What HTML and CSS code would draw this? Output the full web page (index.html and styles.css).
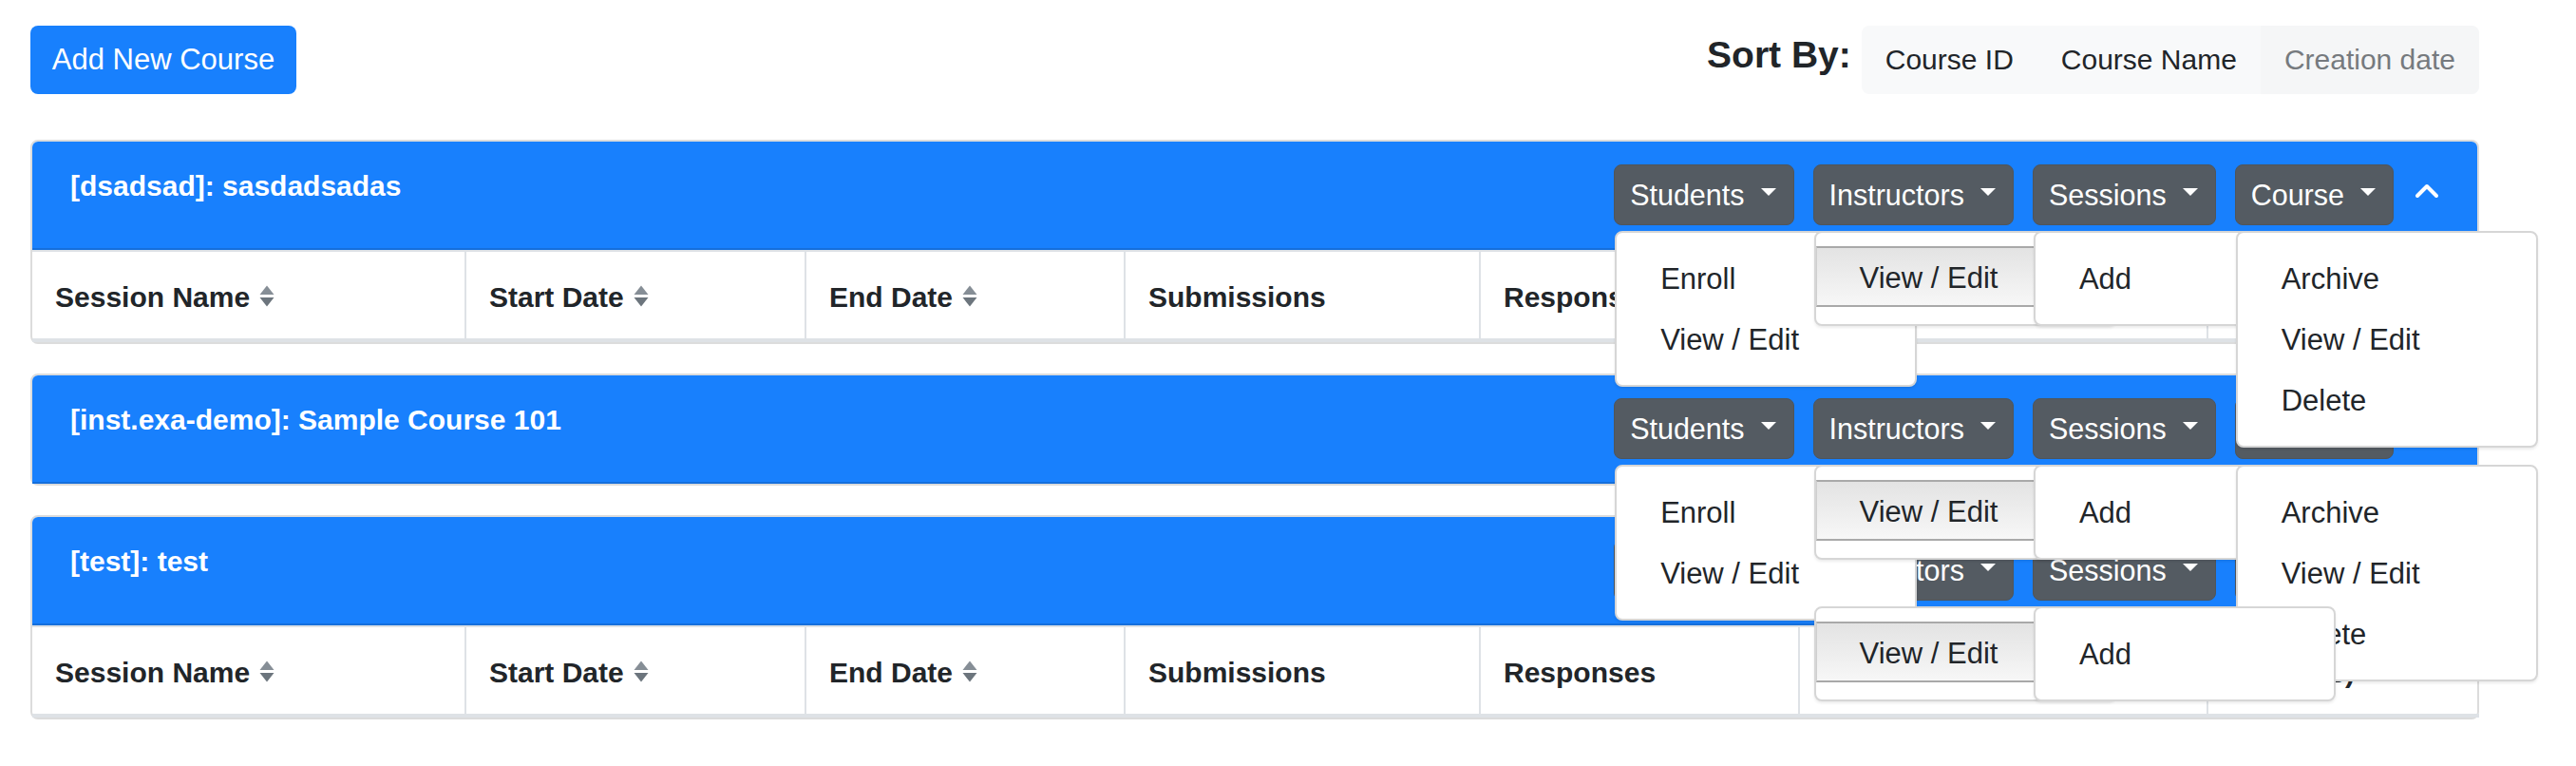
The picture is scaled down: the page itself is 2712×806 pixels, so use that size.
FILE: index.html
```html
<!DOCTYPE html>
<html lang="en">
<head>
<meta charset="utf-8">
<title>Courses</title>
<link rel="stylesheet" href="styles.css">
</head>
<body>
<div class="page">
  <div class="toolbar">
    <button class="btn-add">Add New Course</button>
    <div class="sort">
      <span class="sort-label">Sort By:</span>
      <div class="sort-group">
        <button class="sort-btn">Course ID</button>
        <button class="sort-btn">Course Name</button>
        <button class="sort-btn sort-btn-muted">Creation date</button>
      </div>
    </div>
  </div>

  <!-- Card 1 -->
  <div class="card">
    <div class="card-header">
      <div class="card-title">[dsadsad]: sasdadsadas</div>
      <div class="actions">
        <div class="dd">
          <button class="btn-dark">Students<span class="caret"></span></button>
          <div class="menu">
            <div class="item">Enroll</div>
            <div class="item">View / Edit</div>
          </div>
        </div>
        <div class="dd">
          <button class="btn-dark">Instructors<span class="caret"></span></button>
          <div class="menu">
            <div class="item item-hl">View / Edit</div>
          </div>
        </div>
        <div class="dd">
          <button class="btn-dark">Sessions<span class="caret"></span></button>
          <div class="menu">
            <div class="item">Add</div>
          </div>
        </div>
        <div class="dd">
          <button class="btn-dark">Course<span class="caret"></span></button>
          <div class="menu">
            <div class="item">Archive</div>
            <div class="item">View / Edit</div>
            <div class="item">Delete</div>
          </div>
        </div>
        <span class="chevron"><svg width="26" height="16" viewBox="0 0 26 16"><polyline points="3,13 13,3 23,13" fill="none" stroke="#fff" stroke-width="4" stroke-linecap="round" stroke-linejoin="round"/></svg></span>
      </div>
    </div>
    <div class="thead">
      <div class="th">Session Name<svg class="sorticon" width="16" height="23" viewBox="0 0 16 23"><path d="M8 0.5 L15.5 10 H0.5 Z" fill="#868e96"/><path d="M0.5 13 H15.5 L8 22.5 Z" fill="#6c757d"/></svg></div>
      <div class="th">Start Date<svg class="sorticon" width="16" height="23" viewBox="0 0 16 23"><path d="M8 0.5 L15.5 10 H0.5 Z" fill="#868e96"/><path d="M0.5 13 H15.5 L8 22.5 Z" fill="#6c757d"/></svg></div>
      <div class="th">End Date<svg class="sorticon" width="16" height="23" viewBox="0 0 16 23"><path d="M8 0.5 L15.5 10 H0.5 Z" fill="#868e96"/><path d="M0.5 13 H15.5 L8 22.5 Z" fill="#6c757d"/></svg></div>
      <div class="th">Submissions</div>
      <div class="th">Responses</div>
      <div class="th"></div>
      <div class="th">Action(s)</div>
    </div>
  </div>

  <!-- Card 2 -->
  <div class="card">
    <div class="card-header">
      <div class="card-title">[inst.exa-demo]: Sample Course 101</div>
      <div class="actions">
        <div class="dd">
          <button class="btn-dark">Students<span class="caret"></span></button>
          <div class="menu">
            <div class="item">Enroll</div>
            <div class="item">View / Edit</div>
          </div>
        </div>
        <div class="dd">
          <button class="btn-dark">Instructors<span class="caret"></span></button>
          <div class="menu">
            <div class="item item-hl">View / Edit</div>
          </div>
        </div>
        <div class="dd">
          <button class="btn-dark">Sessions<span class="caret"></span></button>
          <div class="menu">
            <div class="item">Add</div>
          </div>
        </div>
        <div class="dd">
          <button class="btn-dark">Course<span class="caret"></span></button>
          <div class="menu">
            <div class="item">Archive</div>
            <div class="item">View / Edit</div>
            <div class="item">Delete</div>
          </div>
        </div>
        <span class="chevron"><svg width="26" height="16" viewBox="0 0 26 16"><polyline points="3,3 13,13 23,3" fill="none" stroke="#fff" stroke-width="4" stroke-linecap="round" stroke-linejoin="round"/></svg></span>
      </div>
    </div>
  </div>

  <!-- Card 3 -->
  <div class="card">
    <div class="card-header">
      <div class="card-title">[test]: test</div>
      <div class="actions">
        <div class="dd">
          <button class="btn-dark">Students<span class="caret"></span></button>
        </div>
        <div class="dd">
          <button class="btn-dark">Instructors<span class="caret"></span></button>
          <div class="menu">
            <div class="item item-hl">View / Edit</div>
          </div>
        </div>
        <div class="dd">
          <button class="btn-dark">Sessions<span class="caret"></span></button>
          <div class="menu">
            <div class="item">Add</div>
          </div>
        </div>
        <div class="dd">
          <button class="btn-dark">Course<span class="caret"></span></button>
        </div>
        <span class="chevron"><svg width="26" height="16" viewBox="0 0 26 16"><polyline points="3,13 13,3 23,13" fill="none" stroke="#fff" stroke-width="4" stroke-linecap="round" stroke-linejoin="round"/></svg></span>
      </div>
    </div>
    <div class="thead">
      <div class="th">Session Name<svg class="sorticon" width="16" height="23" viewBox="0 0 16 23"><path d="M8 0.5 L15.5 10 H0.5 Z" fill="#868e96"/><path d="M0.5 13 H15.5 L8 22.5 Z" fill="#6c757d"/></svg></div>
      <div class="th">Start Date<svg class="sorticon" width="16" height="23" viewBox="0 0 16 23"><path d="M8 0.5 L15.5 10 H0.5 Z" fill="#868e96"/><path d="M0.5 13 H15.5 L8 22.5 Z" fill="#6c757d"/></svg></div>
      <div class="th">End Date<svg class="sorticon" width="16" height="23" viewBox="0 0 16 23"><path d="M8 0.5 L15.5 10 H0.5 Z" fill="#868e96"/><path d="M0.5 13 H15.5 L8 22.5 Z" fill="#6c757d"/></svg></div>
      <div class="th">Submissions</div>
      <div class="th">Responses</div>
      <div class="th"></div>
      <div class="th">Action(s)</div>
    </div>
  </div>
</div>
</body>
</html>
```

FILE: styles.css
```css
* { box-sizing: border-box; }

html, body {
  margin: 0;
  padding: 0;
  background: #ffffff;
}

body {
  font-family: "Liberation Sans", Arial, Helvetica, sans-serif;
  color: #212529;
}

button {
  font-family: inherit;
  margin: 0;
}

.page {
  width: 2578px;
  margin-left: 32px;
  padding-top: 27px;
}

/* ---------- toolbar ---------- */
.toolbar {
  display: flex;
  justify-content: space-between;
  align-items: flex-start;
  margin-bottom: 48px;
}

.btn-add {
  height: 72px;
  width: 280px;
  padding: 0;
  border: none;
  border-radius: 8px;
  background: #1880fd;
  color: #ffffff;
  font-size: 31px;
}

.sort {
  display: flex;
  align-items: flex-start;
  gap: 11px;
}

.sort-label {
  font-size: 39px;
  font-weight: bold;
  line-height: 47px;
  margin-top: 7px;
}

.sort-group {
  display: flex;
  background: #f8f9fa;
  border-radius: 8px;
  height: 72px;
}

.sort-btn {
  height: 72px;
  padding: 0 24px;
  border: 1px solid transparent;
  background: transparent;
  color: #212529;
  font-size: 30px;
}

.sort-btn-muted {
  color: #767a7e;
  background: #f5f6f7;
  border-radius: 0 8px 8px 0;
}

/* ---------- cards ---------- */
.card {
  border: 2px solid #dcdcdc;
  border-radius: 8px;
  margin-bottom: 31px;
  background: #ffffff;
}

.card-header {
  display: flex;
  justify-content: space-between;
  align-items: flex-start;
  padding: 24px 40px;
  background: #1880fd;
  border-bottom: 2px solid #156fdc;
  border-radius: 6px 6px 0 0;
}

.card-title {
  color: #ffffff;
  font-size: 30px;
  font-weight: bold;
  line-height: 45px;
}

.actions {
  display: flex;
  align-items: center;
  gap: 20px;
}

.dd {
  position: relative;
}

.btn-dark {
  display: flex;
  align-items: center;
  height: 64px;
  padding: 0 18px 0 16px;
  border: 1px solid #4e555b;
  border-radius: 8px;
  background: #545b62;
  color: #ffffff;
  font-size: 30.5px;
  white-space: nowrap;
}

.caret {
  display: inline-block;
  width: 0;
  height: 0;
  margin-left: 17px;
  margin-top: -6px;
  border-top: 8px solid #ffffff;
  border-left: 8px solid transparent;
  border-right: 8px solid transparent;
}

.chevron {
  display: flex;
  width: 26px;
  height: 16px;
  margin-left: 2px;
  margin-top: -8px;
}

/* ---------- dropdown menus ---------- */
.menu {
  position: absolute;
  top: calc(100% + 6px);
  left: 1px;
  width: 318px;
  padding: 16px 0;
  background: #ffffff;
  border: 2px solid #d6d6d6;
  border-radius: 8px;
  box-shadow: 0 2px 3px rgba(0, 0, 0, 0.08);
  z-index: 10;
}

.item {
  padding: 9px 46px 7px;
  font-size: 31px;
  line-height: 48px;
  color: #212529;
  white-space: nowrap;
}

.item-hl {
  margin-top: -2px;
  margin-bottom: 2px;
  padding: 8px 46px 4px 45px;
  background: linear-gradient(#e3e3e3, #f7f7f7);
  border-top: 2px solid #a9a9a9;
  border-bottom: 2px solid #a9a9a9;
  border-left: 1px solid #cfcfcf;
}

/* ---------- table head ---------- */
.thead {
  display: grid;
  grid-template-columns: 455px 358px 336px 374px 336px 430px 287px;
}

.th {
  display: flex;
  align-items: center;
  gap: 10px;
  padding: 25px 24px 21px;
  font-size: 30px;
  font-weight: bold;
  line-height: 45px;
  border-top: 2px solid #dee2e6;
  border-bottom: 4px solid #dee2e6;
  border-left: 2px solid #dee2e6;
  white-space: nowrap;
}

.th:first-child {
  border-left: none;
}

.sorticon {
  flex: none;
  margin-top: -2px;
}
```
